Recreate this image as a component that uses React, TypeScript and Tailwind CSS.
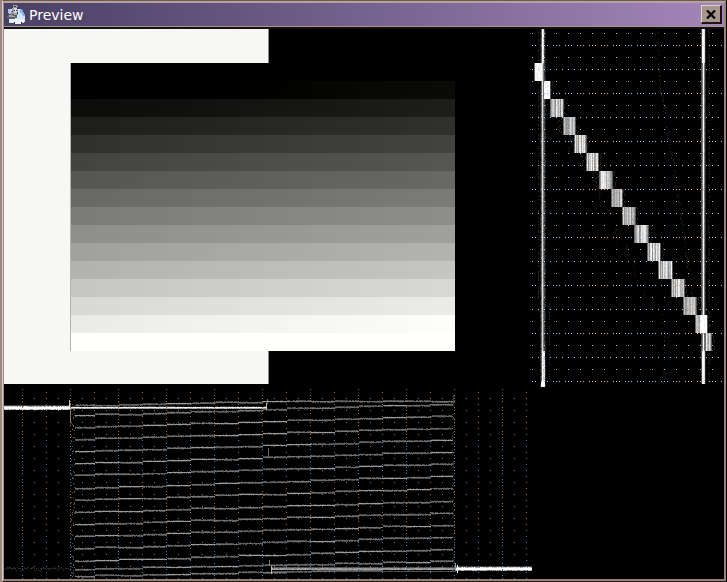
import * as React from "react"

const BLUE = "#90c8ee"
const ORANGE = "#efb184"
const DIM_BLUE = "#4583b4"
const DIM_ORANGE = "#ab6a3c"
const WHITE = "rgb(255,255,255)"

// window coordinates of the two scopes
const WAVE = { x: 4, y: 384, width: 528, height: 195 }
const SCOPE = { x: 532, y: 29, width: 191, height: 358 }

type Layers = Record<string, string>

function createRandom(seed: number) {
  let s = seed
  return () => {
    s = (s * 1664525 + 1013904223) % 4294967296
    return s / 4294967296
  }
}

function plot(layers: Layers, color: string, x: number, y: number, w = 1, h = 1) {
  layers[color] = (layers[color] || "") + `M${x} ${y}h${w}v${h}h${-w}z`
}

function gray(level: number) {
  const v = Math.max(0, Math.min(255, Math.round(level / 12) * 12 + 3))
  return `rgb(${v},${v},${v})`
}

// dark layers go below bright ones, the graticule stays on top
function depth(color: string) {
  return color.startsWith("rgb") ? parseInt(color.slice(4), 10) : 999
}

function levelOf(row: number, col: number) {
  if (row === 15) return 255
  return Math.max(0, Math.round((row * 16 + col - 16) * 1.164 - 7))
}

function buildWaveform() {
  const out: Layers = {}
  const random = createRandom(7)

  // start and end heights of the sixteen rows
  const rows: [number, number][] = [[576, 568], [569, 561]]
  for (let i = 12; i >= 0; i--) rows.push([Math.round(414.7 + i * 12.15), Math.round(403.7 + i * 12.1)])
  rows.push([405, 401])

  rows.forEach(([from, to], row) => {
    for (let col = 0; col < 16; col++) {
      let y = Math.round(from + ((to - from) * col) / 15)
      if (row === 15) y = Math.max(401, 405 - Math.floor(col / 2))
      const sharp = random() > 0.7
      const bright = sharp ? 140 : 80 + random() * 25
      const spread = random() > 0.5 ? 1 : -1
      for (let i = 0; i < 24; i++) {
        const x = 71 + col * 24 + i
        if (x < 75 || x > 452) continue
        plot(out, gray(bright + random() * 22), x, y)
        if (random() > 0.15) plot(out, gray((sharp ? 36 : 58) + random() * 28), x, y + spread)
        if (random() > 0.7) plot(out, gray(38), x, y - spread)
      }
    }
    // ringing at both edges of the pattern
    for (let k = 0; k < 7; k++) {
      plot(out, gray(50 + random() * 50), 71 + Math.floor(random() * 4), from - 5 + Math.floor(random() * 10))
      plot(out, gray(40 + random() * 30), 452 + Math.floor(random() * 3), to - 5 + Math.floor(random() * 10))
    }
  })

  // border level, white on the left half
  for (let x = 4; x < 267; x++) {
    if (x < 70) {
      plot(out, WHITE, x, 407, 1, 2)
      plot(out, gray(130 + random() * 120), x, 406)
      plot(out, gray(120 + random() * 135), x, 409)
      plot(out, gray(50 + random() * 20), x, 405)
    } else {
      plot(out, gray(215 + random() * 40), x, 407)
      plot(out, gray(130 + random() * 60), x, 408)
      if (random() > 0.4) plot(out, gray(60), x, 406)
    }
  }
  for (let x = 4; x < 72; x++) {
    plot(out, gray(25 + random() * 25), x, 567 + Math.floor(random() * 4))
    if (random() > 0.4) plot(out, gray(30 + random() * 15), x, 568)
  }
  // and black on the right half
  for (let x = 271; x < 532; x++) {
    if (x < 456) {
      plot(out, gray(130 + random() * 50), x, 569)
      plot(out, gray(120 + random() * 50), x, 568)
      plot(out, gray(60 + random() * 40), x, 567)
      plot(out, gray(55 + random() * 40), x, 571)
    } else {
      plot(out, WHITE, x, 568, 1, 2)
      plot(out, gray(130 + random() * 125), x, 567)
      plot(out, gray(90 + random() * 120), x, 570)
      plot(out, gray(40 + random() * 40), x, 566)
    }
  }
  // transients
  plot(out, gray(190), 69, 400, 1, 8)
  plot(out, gray(120), 70, 403, 1, 20)
  plot(out, gray(180), 266, 403, 1, 7)
  plot(out, gray(110), 267, 399, 1, 5)
  plot(out, gray(95), 268, 448, 1, 9)
  plot(out, gray(120), 269, 560, 1, 6)
  plot(out, gray(180), 271, 566, 1, 8)
  plot(out, gray(60), 453, 395, 1, 8)
  plot(out, gray(150), 455, 563, 1, 8)
  plot(out, gray(240), 457, 565, 1, 8)

  // graticule
  const isBlue = (y: number) => (y >= 440 && y < 488) || y >= 536
  for (let x = 22, i = 0; x < 532; x += 12, i++) {
    for (let y = 389; y < 579; y += 3) {
      const step = (y - 398) / 3
      const shown = i % 4 === 0 ? Math.abs(step) % 4 !== 2 : i % 4 === 2 ? step % 2 === 0 : step % 4 === 0
      if (shown) plot(out, isBlue(y) ? DIM_BLUE : DIM_ORANGE, x, y)
    }
  }
  return out
}

const BLOCKS = [
  [534, 543], [543, 551], [550, 564], [563, 576], [574, 587], [586, 599], [599, 613], [611, 623],
  [622, 636], [634, 649], [647, 661], [658, 673], [671, 685], [683, 697], [695, 708], [705, 712],
]

function buildScope() {
  const out: Layers = {}
  const random = createRandom(21)

  // side lines
  for (let y = 29; y < 387; y++) {
    const solid = y < 63 || y >= 351
    plot(out, gray(75 + random() * 45), 541, y)
    plot(out, solid ? WHITE : gray(215), 542, y)
    plot(out, gray(solid ? 180 + random() * 75 : 95 + random() * 45), 543, y)
    plot(out, gray(solid && y >= 351 ? 180 + random() * 75 : 50 + random() * 30), 544, y)
    if (random() > 0.3) plot(out, gray(40), 540, y)
    if (random() > 0.4) plot(out, gray(30 + random() * 20), 545, y)
    if (random() > 0.6) plot(out, gray(34), y < 300 ? 538 : 549, y)
    if (y < 384) {
      plot(out, gray(55 + random() * 35), 701, y)
      plot(out, gray(solid ? 235 : 110 + random() * 30), 702, y)
      plot(out, WHITE, 703, y)
      plot(out, gray(solid ? 215 : 100 + random() * 30), 704, y)
      plot(out, gray(36), 705, y)
      if (random() > 0.45) plot(out, gray(34), 709 - (y % 2), y)
    }
  }
  plot(out, WHITE, 541, 382, 4, 5)

  BLOCKS.forEach(([left, right], row) => {
    const top = 63 + row * 18
    for (let x = left; x < right; x++) {
      let base = row < 2 ? 230 : 120 + random() * 110
      if (row === 14) base = x < 700 ? 150 + random() * 60 : 240
      if (x === left) base = 90
      if (x === right - 1) base = 70
      for (let y = top; y < top + 18; y++) plot(out, gray(base + random() * 24), x, y)
    }
    for (let y = top; y < top + 18; y++) {
      if (row > 1 && row < 7) plot(out, gray(24 + random() * 28), left - 1 - Math.floor(random() * 6), y)
      if (random() > 0.4) plot(out, gray(34), right + Math.floor(random() * 3), y)
      if (row > 6 && random() > 0.5) plot(out, gray(22), left - 13 - (row - 7) * 3 + Math.floor(random() * 3), y)
    }
  })

  // faint slanted trace
  for (let y = 32; y < 384; y++) {
    if (random() > 0.4) {
      const x = y < 90 ? 655 + (y - 30) * 0.06 : y < 330 ? 660 + (y - 90) * 0.15 : 662
      plot(out, gray(24 + random() * 14), Math.round(x + random() * 3), y)
    }
  }

  // graticule
  for (let y = 33, i = 0; y < 387; y += 12, i++) {
    for (let x = 532; x < 722; x += 3) {
      const step = (x - 532) / 3
      const shown = i % 4 === 1 ? step % 4 !== 2 : i % 4 === 3 ? step % 2 === 0 : step % 4 === 0
      if (shown) plot(out, Math.floor((x - 529) / 48) % 2 ? ORANGE : BLUE, x, y)
    }
  }
  return out
}

const waveform = buildWaveform()
const scope = buildScope()

interface ScopeProps {
  area: { x: number; y: number; width: number; height: number }
  layers: Layers
  label: string
}

function Scope({ area, layers, label }: ScopeProps) {
  return (
    <svg
      role="img"
      aria-label={label}
      width={area.width}
      height={area.height}
      viewBox={`${area.x} ${area.y} ${area.width} ${area.height}`}
      shapeRendering="crispEdges"
      className="block shrink-0"
    >
      {Object.entries(layers)
        .sort(([a], [b]) => depth(a) - depth(b))
        .map(([color, d]) => (
          <path key={color} d={d} fill={color} />
        ))}
    </svg>
  )
}

function PreviewIcon() {
  return (
    <svg width="20" height="20" viewBox="0 0 20 20" aria-hidden="true" className="shrink-0" shapeRendering="crispEdges">
      <path d="M2 4h13v1h1v2h1v2h1v8h-1v1H2z" fill="#cfe3fa" />
      <path d="M3 14h14v3H3z" fill="#e6f1ff" />
      <path d="M13 4h2v1h1v2h1v2h1v2h-2v-1h-1V8h-2z" fill="#78b0f0" />
      <path d="M1 4h3v6H2V8H1z" fill="#a8cbf2" />
      <path d="M6 0h4v1h1v9h-1v1H9v1H5V9H4V6h1V1h1z" fill="#9c9faa" />
      <path d="M7 3h3v5H7z" fill="#d4d8e2" />
      <path d="M5 1h1v2H5zM7 1h2v1H7zM10 2h1v2h-1zM7 5h1v1H7zM9 5h1v1H9zM5 6h1v1H5zM10 7h1v2h-1z" fill="#30323a" />
      <path d="M1 9h6v1h3v3H8v1H1v-1H0v-2h1z" fill="#606168" />
      <path d="M2 10h4v1h2v1H2z" fill="#a4a5a9" />
      <path d="M8 17h6v2H8z" fill="#fafcff" />
      <path d="M7 17h1v1H7zM14 17h1v1h-1z" fill="#1b2030" />
    </svg>
  )
}

function TitleBar() {
  return (
    <header className="flex h-[23px] items-center bg-linear-to-r from-[#4a4064] to-[#a486ba] pr-[2px] pl-[3px]">
      <PreviewIcon />
      <h1 className="ml-[2px] flex-1 font-['DejaVu_Sans',sans-serif] text-[14px] leading-5 text-white">Preview</h1>
      <button
        type="button"
        aria-label="Close"
        className="flex h-[19px] w-[21px] items-center justify-center border-t border-r-2 border-b-2 border-l border-t-[#ded4cf] border-r-[#1c1513] border-b-[#1c1513] border-l-[#ded4cf] bg-[#a8958c]"
      >
        <svg width="10" height="9" viewBox="0 0 10 9">
          <path d="M1 0.5L9 8.5M9 0.5L1 8.5" stroke="#000" strokeWidth="2.4" />
        </svg>
      </button>
    </header>
  )
}

function TestPattern() {
  return (
    <div className="grid h-[355px] w-[528px] bg-black">
      <div className="col-start-1 row-start-1 w-[265px] border-r border-[#8c8c8c] bg-[#f7f7f5]" />
      <div className="col-start-1 row-start-1 mt-[34px] ml-[66px] h-72 w-[385px] border-l border-[#b4b4b4]">
        {Array.from({ length: 16 }, (_, row) => (
          <div key={row} className="flex h-[18px]">
            {Array.from({ length: 16 }, (_, col) => {
              const v = levelOf(row, col)
              return <span key={col} className="flex-1" style={{ backgroundColor: `rgb(${v},${v},${Math.max(0, v - 1)})` }} />
            })}
          </div>
        ))}
      </div>
    </div>
  )
}

export default function App() {
  return (
    <div className="min-h-screen bg-[#9c8880] pl-[2px]">
      <div className="flex min-h-screen flex-col border-t border-r border-b border-l border-t-[#6d5a55] border-r-black border-b-[#241a18] border-l-[#d8ccc6] bg-black">
        <div className="flex flex-1 flex-col border-t-2 border-r-2 border-b-2 border-l border-t-[#b5a39b] border-r-[#95817a] border-b-[#95817a] border-l-[#a08d85]">
          <TitleBar />
          <div className="h-[3px] border-t border-[#a8958c] bg-[#151014]" />
          <main className="flex flex-1 bg-black">
            <div className="shrink-0">
              <TestPattern />
              <Scope area={WAVE} layers={waveform} label="Waveform" />
            </div>
            <Scope area={SCOPE} layers={scope} label="Level scope" />
          </main>
        </div>
      </div>
    </div>
  )
}
